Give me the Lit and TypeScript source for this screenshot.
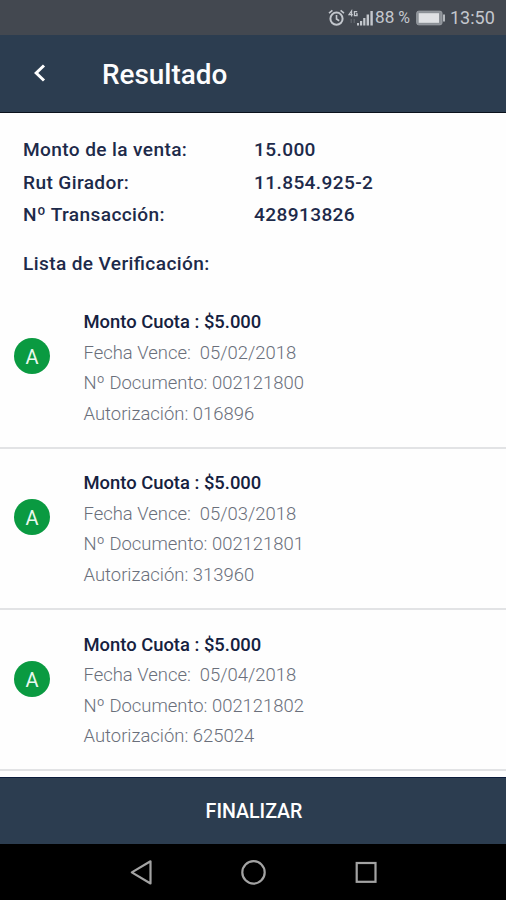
import { LitElement, html, css } from "lit";
import { customElement } from "lit/decorators.js";

interface Installment {
  amount: string;
  due: string;
  doc: string;
  auth: string;
}

const INSTALLMENTS: Installment[] = [
  { amount: "$5.000", due: "05/02/2018", doc: "002121800", auth: "016896" },
  { amount: "$5.000", due: "05/03/2018", doc: "002121801", auth: "313960" },
  { amount: "$5.000", due: "05/04/2018", doc: "002121802", auth: "625024" },
];

@customElement("status-bar")
class StatusBar extends LitElement {
  static styles = css`
    :host {
      display: flex;
      align-items: center;
      justify-content: flex-end;
      height: 35px;
      box-sizing: border-box;
      padding-right: 11px;
      background: #434850;
      color: #c3c7cd;
      font-family: Roboto, sans-serif;
      line-height: 35px;
    }
    .alarm { margin-right: 3px; }
    .signal { margin-right: 1px; }
    .battery { margin: 0 4px 0 4px; }
    .pct { width: 37px; white-space: pre; font-size: 17.2px; }
    .sign { font-size: 16px; }
    .time { width: 45px; font-size: 18px; }
    svg { display: block; flex: none; }
  `;
  render() {
    return html`
      <svg class="alarm" width="17" height="18" viewBox="0 0 17 18" fill="none" stroke="#c3c7cd" stroke-width="2">
        <circle cx="8.5" cy="9.7" r="6.1" />
        <path stroke-width="1.6" d="M8.5 6v4l2.7 1.7M1 4.2 4.4 1.4M16 4.2l-3.4-2.8" />
      </svg>
      <svg class="signal" width="26" height="18" viewBox="0 0 26 18">
        <g fill="none" stroke="#c3c7cd" stroke-width="1.2">
          <path d="M3.6 7.4V2L1 5.7h3.8M9.2 2.7H6.4v4h2.7V4.8H7.8" />
        </g>
        <path fill="#5c6168" d="M2.5 10h1.5v4H2.5zM5.5 10h1.5v4H5.5z" />
        <path fill="#c3c7cd" d="M9 14h2v2.5H9zM12 12h2.2v4.5H12zM15.2 9h2.2v7.5h-2.2zM18.6 5.5h2.4v11h-2.4zM22.4 2h2.4v14.5h-2.4z" />
      </svg>
      <span class="pct">88<span class="sign"> %</span></span>
      <svg class="battery" width="30" height="16" viewBox="0 0 30 16">
        <rect x="0.7" y="1.2" width="25.3" height="13.6" rx="2" fill="#8b9096" stroke="#9ca0a6" />
        <rect x="2.7" y="3.2" width="20.3" height="9.6" fill="#dfe1e4" />
        <path d="M27 4.5h2v7h-2z" fill="#b3b7bc" />
      </svg>
      <span class="time">13:50</span>
    `;
  }
}

@customElement("installment-row")
class InstallmentRow extends LitElement {
  static properties = { item: { attribute: false } };
  declare item: Installment;

  static styles = css`
    :host {
      display: flex;
      align-items: flex-start;
      box-sizing: border-box;
      height: 161.3px;
      padding: 19.5px 0 0 14px;
      border-bottom: 2px solid #e2e3e5;
      font-family: Roboto, sans-serif;
    }
    .badge {
      flex: none;
      width: 36px;
      height: 36px;
      margin: 31px 33.5px 0 0;
      border-radius: 50%;
      background: #0a9a41;
      color: #e9f8ee;
      font-size: 20px;
      font-weight: 400;
      line-height: 38px;
      text-align: center;
    }
    .lines {
      color: #6a6f7b;
      font-size: 18.45px;
      font-weight: 300;
      line-height: 30.5px;
    }
    .lines div { white-space: pre; }
    .lines .amount { color: #15213f; font-size: 18.4px; font-weight: 500; }
  `;
  render() {
    const i = this.item;
    return html`
      <div class="badge">A</div>
      <div class="lines">
        <div class="amount">Monto Cuota : ${i.amount}</div>
        <div>Fecha Vence:  ${i.due}</div>
        <div>Nº Documento: ${i.doc}</div>
        <div>Autorización: ${i.auth}</div>
      </div>
    `;
  }
}

@customElement("app-root")
class AppRoot extends LitElement {
  static styles = css`
    :host {
      display: flex;
      flex-direction: column;
      width: 506px;
      height: 900px;
      overflow: hidden;
      background: #fefefe;
      font-family: Roboto, sans-serif;
    }
    header {
      display: flex;
      align-items: center;
      flex: none;
      height: 78px;
      box-sizing: border-box;
      padding: 1px 0 0 33px;
      border-bottom: 1.5px solid #0b121c;
      background: #2c3d50;
      color: #fdfdfe;
    }
    header svg { margin: 0 56px 2px 0; }
    h1 { margin: 2px 0 0; font-size: 27.9px; font-weight: 500; line-height: 32px; }
    .summary, h2 {
      flex: none;
      color: #1d2a4a;
      font-size: 19.1px;
      font-weight: 500;
      letter-spacing: 0.38px;
      font-feature-settings: "liga" 1;
      line-height: 32.3px;
    }
    .summary {
      display: grid;
      grid-template-columns: 231px 1fr;
      grid-auto-rows: 32.3px;
      margin: 21.3px 0 0 23px;
    }
    h2 { margin: 16.7px 0 0 23px; }
    main { flex: 1; min-height: 0; padding-top: 7.4px; overflow: hidden; }
    .finish {
      flex: none;
      height: 67px;
      box-sizing: border-box;
      border: 0;
      border-top: 1.5px solid #0c1c3c;
      padding: 1px 0 0 2px;
      background: #2c3d50;
      color: #fff;
      font: 500 19.6px/65px Roboto, sans-serif;
    }
    nav { display: flex; justify-content: center; flex: none; height: 56px; background: #000; }
  `;
  render() {
    return html`
      <status-bar></status-bar>
      <header>
        <svg width="13" height="18" viewBox="0 0 13 18" fill="none" stroke="#fff" stroke-width="3">
          <path d="M11 1.5 3.2 9l7.8 7.5" />
        </svg>
        <h1>Resultado</h1>
      </header>
      <div class="summary">
        <span>Monto de la venta:</span><span>15.000</span>
        <span>Rut Girador:</span><span>11.854.925-2</span>
        <span>Nº Transacción:</span><span>428913826</span>
      </div>
      <h2>Lista de Verificación:</h2>
      <main>${INSTALLMENTS.map((i) => html`<installment-row .item=${i}></installment-row>`)}</main>
      <button class="finish">FINALIZAR</button>
      <nav>
        <svg width="260" height="56" viewBox="0 0 260 56" fill="none" stroke="#a3a3a3" stroke-width="2.2">
          <path d="M27.5 17.3v22.2L8.8 28.4z" stroke-linejoin="round" />
          <circle cx="130.5" cy="28.4" r="11.2" />
          <rect x="233.7" y="19" width="18.8" height="18.8" />
        </svg>
      </nav>
    `;
  }
}
